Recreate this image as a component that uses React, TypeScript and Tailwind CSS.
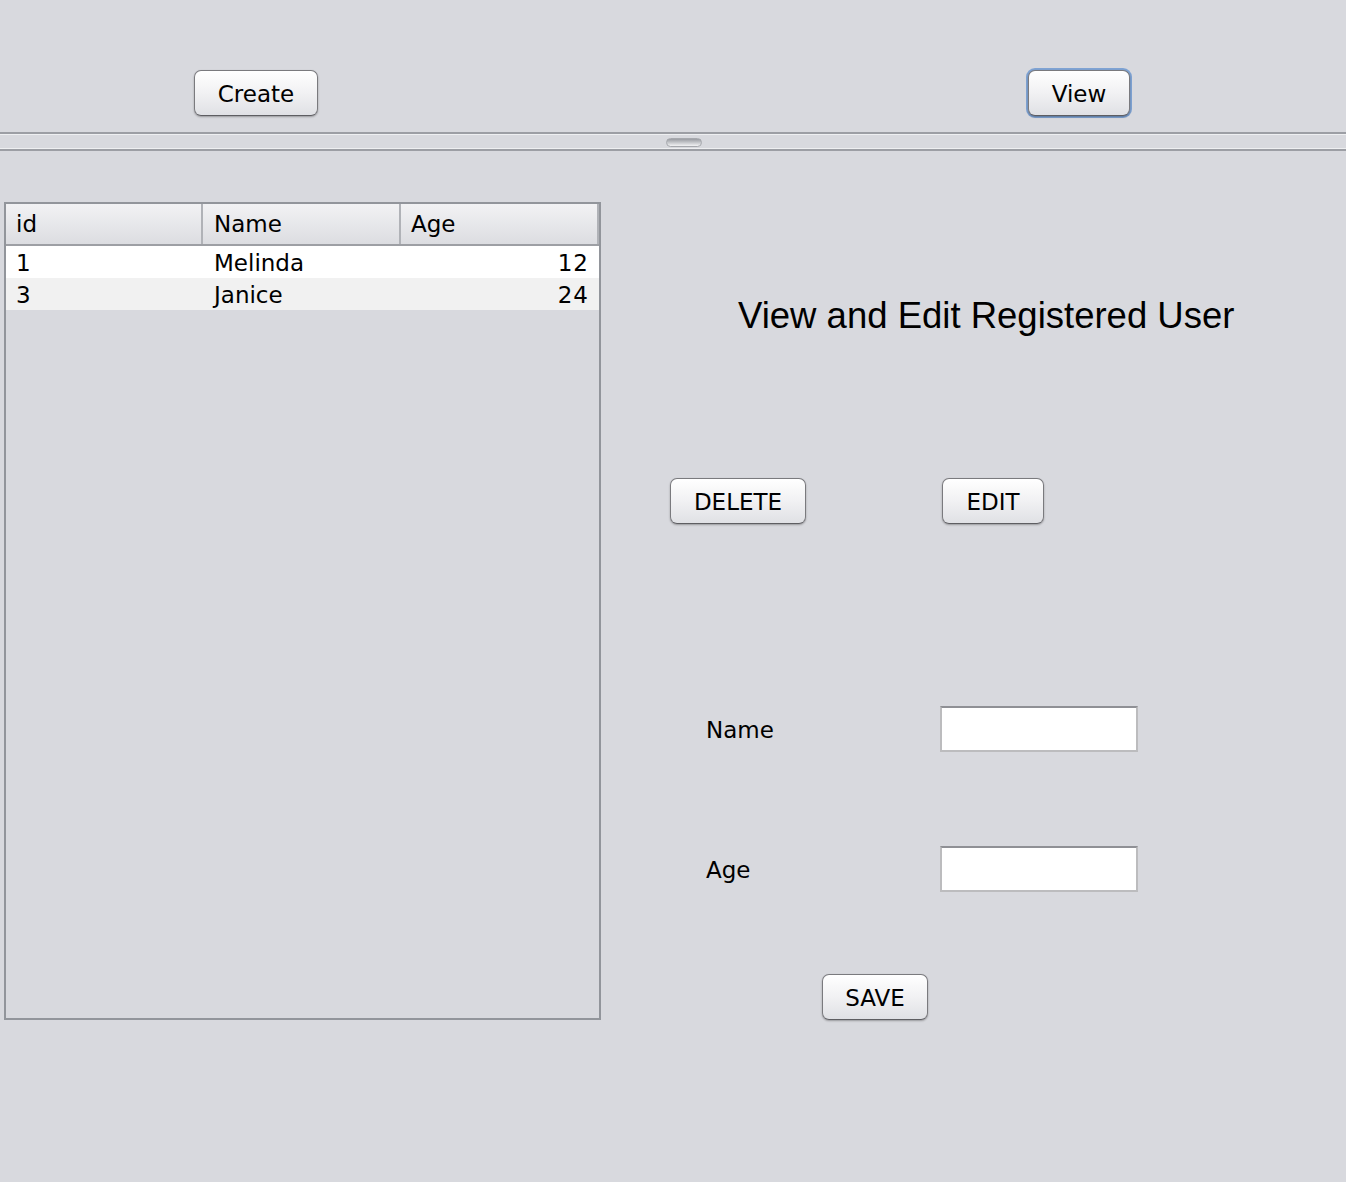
import * as React from "react";

const uiFont = "font-['DejaVu_Sans',sans-serif]";

function AquaButton({
  label,
  className = "",
  focused = false,
}: {
  label: string;
  className?: string;
  focused?: boolean;
}): React.ReactElement {
  return (
    <div
      className={`${className} ${
        focused ? "rounded-[9px] p-[2px] bg-[#7fa3d3]" : ""
      }`}
    >
      <button
        className={`h-[46px] w-full pt-[2px] rounded-[7px] border border-[#7a7a7e] border-b-[#5e5e62] bg-gradient-to-b from-[#ffffff] via-[#f1f1f3] to-[#e0e1e5] shadow-[0_1px_2px_rgba(0,0,0,0.3)] text-[23px] text-black ${uiFont}`}
      >
        {label}
      </button>
    </div>
  );
}

const rows = [
  { id: "1", name: "Melinda", age: "12" },
  { id: "3", name: "Janice", age: "24" },
];

export default function App(): React.ReactElement {
  return (
    <div className={`w-[1346px] h-[1182px] bg-[#d8d9de] overflow-hidden ${uiFont}`}>
      {/* top bar */}
      <div className="h-[132px] flex items-start pt-[70px]">
        <AquaButton label="Create" className="ml-[194px] w-[124px]" />
        <AquaButton label="View" focused className="ml-auto mr-[214px] -mt-[2px] w-[106px]" />
      </div>

      {/* split divider */}
      <div className="h-[19px] flex flex-col">
        <div className="h-[2px] bg-[#9c9ea4]" />
        <div className="h-[1px] bg-[#eeeff1]" />
        <div className="flex-1 flex justify-center items-start pt-[3px]">
          <div className="ml-[22px] w-[36px] h-[9px] rounded-full border border-[#a6a8ad] bg-gradient-to-b from-[#9a9ca2] via-[#c5c7cb] to-[#f2f2f4]" />
        </div>
        <div className="h-[1px] bg-[#eeeff1]" />
        <div className="h-[2px] bg-[#9c9ea4]" />
      </div>

      {/* main content */}
      <div className="flex pt-[51px]">
        <div className="ml-[4px] w-[597px] h-[818px] border-2 border-[#92959b] flex flex-col">
          <div className="h-[42px] flex border-b-2 border-[#9d9fa4] bg-gradient-to-b from-[#f2f2f4] to-[#dcdde1] text-[23px] text-black">
            <div className="w-[197px] pl-[10px] flex items-center border-r-2 border-[#b0b2b7]">id</div>
            <div className="w-[198px] pl-[11px] flex items-center border-r-2 border-[#b0b2b7]">Name</div>
            <div className="flex-1 pl-[10px] flex items-center border-r-2 border-[#b0b2b7]">Age</div>
          </div>
          {rows.map((r, i) => (
            <div
              key={r.id}
              className={`h-[32px] flex items-center pt-[2px] text-[23px] text-black ${
                i % 2 === 0 ? "bg-white" : "bg-[#f1f1f1]"
              }`}
            >
              <div className="w-[197px] pl-[10px]">{r.id}</div>
              <div className="w-[198px] pl-[11px]">{r.name}</div>
              <div className="flex-1 pr-[10px] text-right tracking-[1px]">{r.age}</div>
            </div>
          ))}
        </div>

        <div className="flex-1 flex flex-col">
          <div className="mt-[94px] h-[40px] pl-[137px] flex items-center text-[36.5px] text-black font-['Liberation_Sans',sans-serif]">
            View and Edit Registered User
          </div>

          <div className="mt-[142px] flex">
            <AquaButton label="DELETE" className="ml-[69px] w-[136px]" />
            <AquaButton label="EDIT" className="ml-[136px] w-[102px]" />
          </div>

          <div className="mt-[182px] flex items-center">
            <span className="ml-[105px] w-[234px] pt-[2px] text-[23px] text-black">Name</span>
            <input className="w-[198px] h-[46px] bg-white border-2 border-[#bcbcbe] border-t-[#8f9095] outline-none" />
          </div>

          <div className="mt-[94px] flex items-center">
            <span className="ml-[105px] w-[234px] pt-[2px] text-[23px] text-black">Age</span>
            <input className="w-[198px] h-[46px] bg-white border-2 border-[#bcbcbe] border-t-[#8f9095] outline-none" />
          </div>

          <div className="mt-[82px] flex">
            <AquaButton label="SAVE" className="ml-[221px] w-[106px]" />
          </div>
        </div>
      </div>
    </div>
  );
}
